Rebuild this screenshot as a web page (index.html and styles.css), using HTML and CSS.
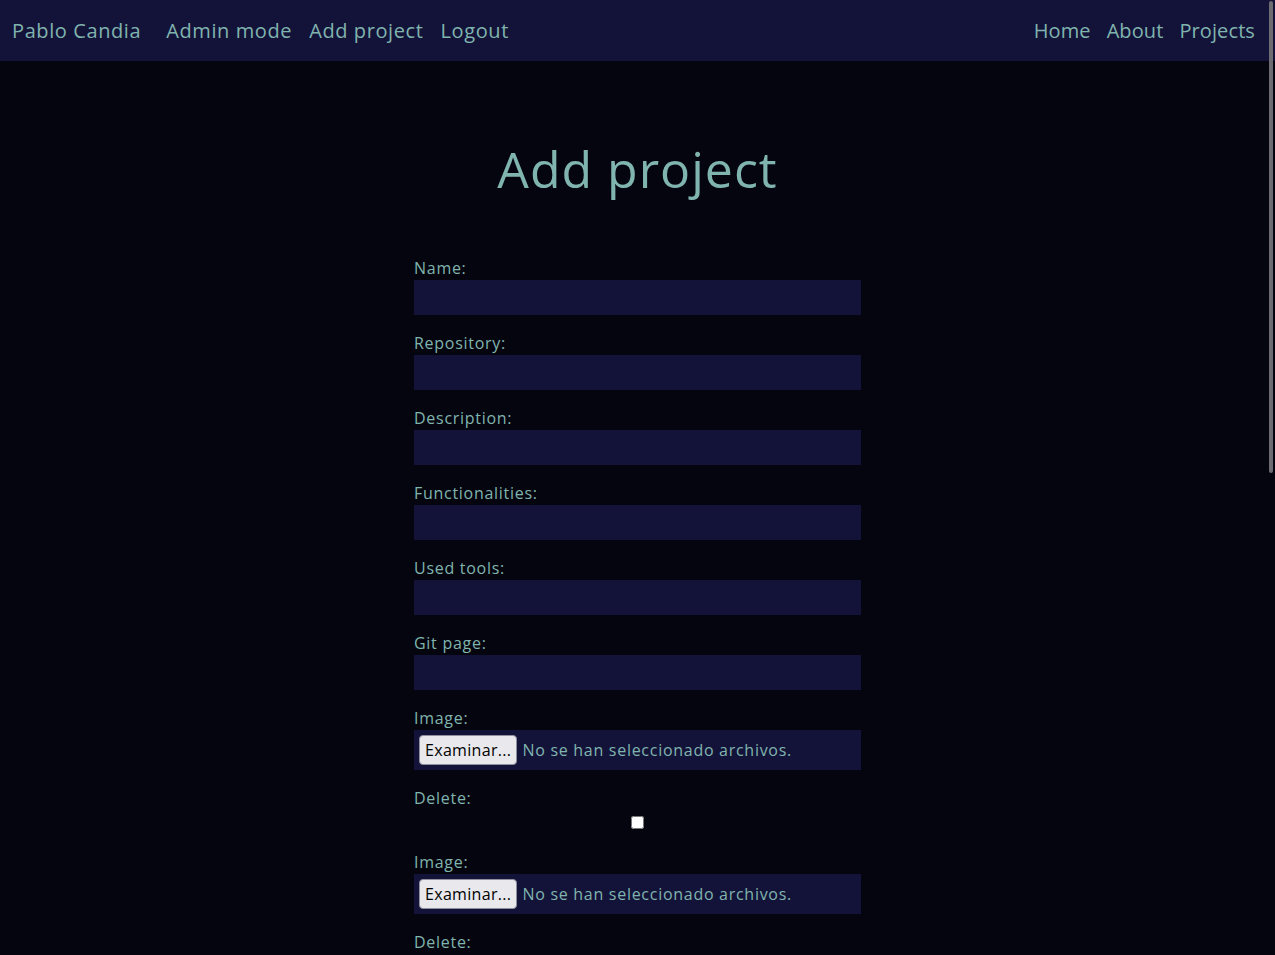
FILE: index.html
```html
<!DOCTYPE html>
<html lang="en">
<head>
<meta charset="utf-8">
<title>Add project</title>
<link rel="stylesheet" href="styles.css">
</head>
<body>
<nav class="navbar">
  <div class="nav-left">
    <a class="brand" href="#">Pablo Candia</a>
    <a class="nav-link" href="#">Admin mode</a>
    <a class="nav-link" href="#">Add project</a>
    <a class="nav-link" href="#">Logout</a>
  </div>
  <div class="nav-right">
    <a class="nav-link" href="#">Home</a>
    <a class="nav-link" href="#">About</a>
    <a class="nav-link" href="#">Projects</a>
  </div>
</nav>
<main class="main">
  <h1 class="title">Add project</h1>
  <form class="form">
    <div class="field"><label class="label">Name:</label><input class="input" type="text"></div>
    <div class="field"><label class="label">Repository:</label><input class="input" type="text"></div>
    <div class="field"><label class="label">Description:</label><input class="input" type="text"></div>
    <div class="field"><label class="label">Functionalities:</label><input class="input" type="text"></div>
    <div class="field"><label class="label">Used tools:</label><input class="input" type="text"></div>
    <div class="field"><label class="label">Git page:</label><input class="input" type="text"></div>
    <div class="field"><label class="label">Image:</label>
      <div class="file"><span class="file-btn">Examinar...</span><span class="file-text">No se han seleccionado archivos.</span></div>
    </div>
    <div class="field"><label class="label">Delete:</label><input class="check" type="checkbox"></div>
    <div class="field"><label class="label">Image:</label>
      <div class="file"><span class="file-btn">Examinar...</span><span class="file-text">No se han seleccionado archivos.</span></div>
    </div>
    <div class="field"><label class="label">Delete:</label><input class="check" type="checkbox"></div>
  </form>
</main>
<div class="scroll-thumb"></div>
</body>
</html>
```
FILE: styles.css
```css
html { overflow: hidden; }
body {
  margin: 0;
  background: #05050f;
  color: #80b4ae;
  font-family: "Open Sans", "DejaVu Sans", sans-serif;
  letter-spacing: 0.045em;
}
a { color: inherit; text-decoration: none; }
.navbar {
  height: 61px;
  background: #131339;
  display: flex;
  justify-content: space-between;
  align-items: center;
  padding: 0 20px 0 12px;
  box-sizing: border-box;
  font-size: 20px;
  letter-spacing: 0.03em;
}
.nav-left, .nav-right { display: flex; align-items: center; gap: 17px; }
.nav-right { gap: 16px; letter-spacing: 0.005em; }
.brand { margin-right: 8px; }
.main { display: flex; flex-direction: column; align-items: center; }
.title {
  margin: 78px 0 0;
  font-size: 50px;
  font-weight: 500;
  line-height: 60px;
  letter-spacing: 0.02em;
}
.form { width: 447px; margin-top: 57px; }
.field { margin-bottom: 16px; }
.label { display: block; font-size: 16px; line-height: 24px; font-weight: 500; }
.input {
  display: block;
  width: 100%;
  height: 35px;
  box-sizing: border-box;
  border: 0;
  background: #131339;
  margin: 0;
}
.file {
  height: 40px;
  background: #131339;
  display: flex;
  align-items: center;
  padding: 0 5px;
  gap: 5px;
}
.file-btn {
  height: 30px;
  box-sizing: border-box;
  padding: 0 5px;
  display: flex;
  align-items: center;
  background: #e9e9ed;
  color: #000;
  border: 1px solid #8f8f9d;
  border-radius: 4px;
  font-size: 16px;
  letter-spacing: 0.02em;
}
.file-text { font-size: 16px; }
.check {
  display: block;
  width: 13px;
  height: 13px;
  margin: 6px auto 21px;
}
.scroll-thumb {
  position: fixed;
  top: 1px;
  right: 2px;
  width: 4px;
  height: 472px;
  border-radius: 2px;
  background: #6c6c72;
}
```
